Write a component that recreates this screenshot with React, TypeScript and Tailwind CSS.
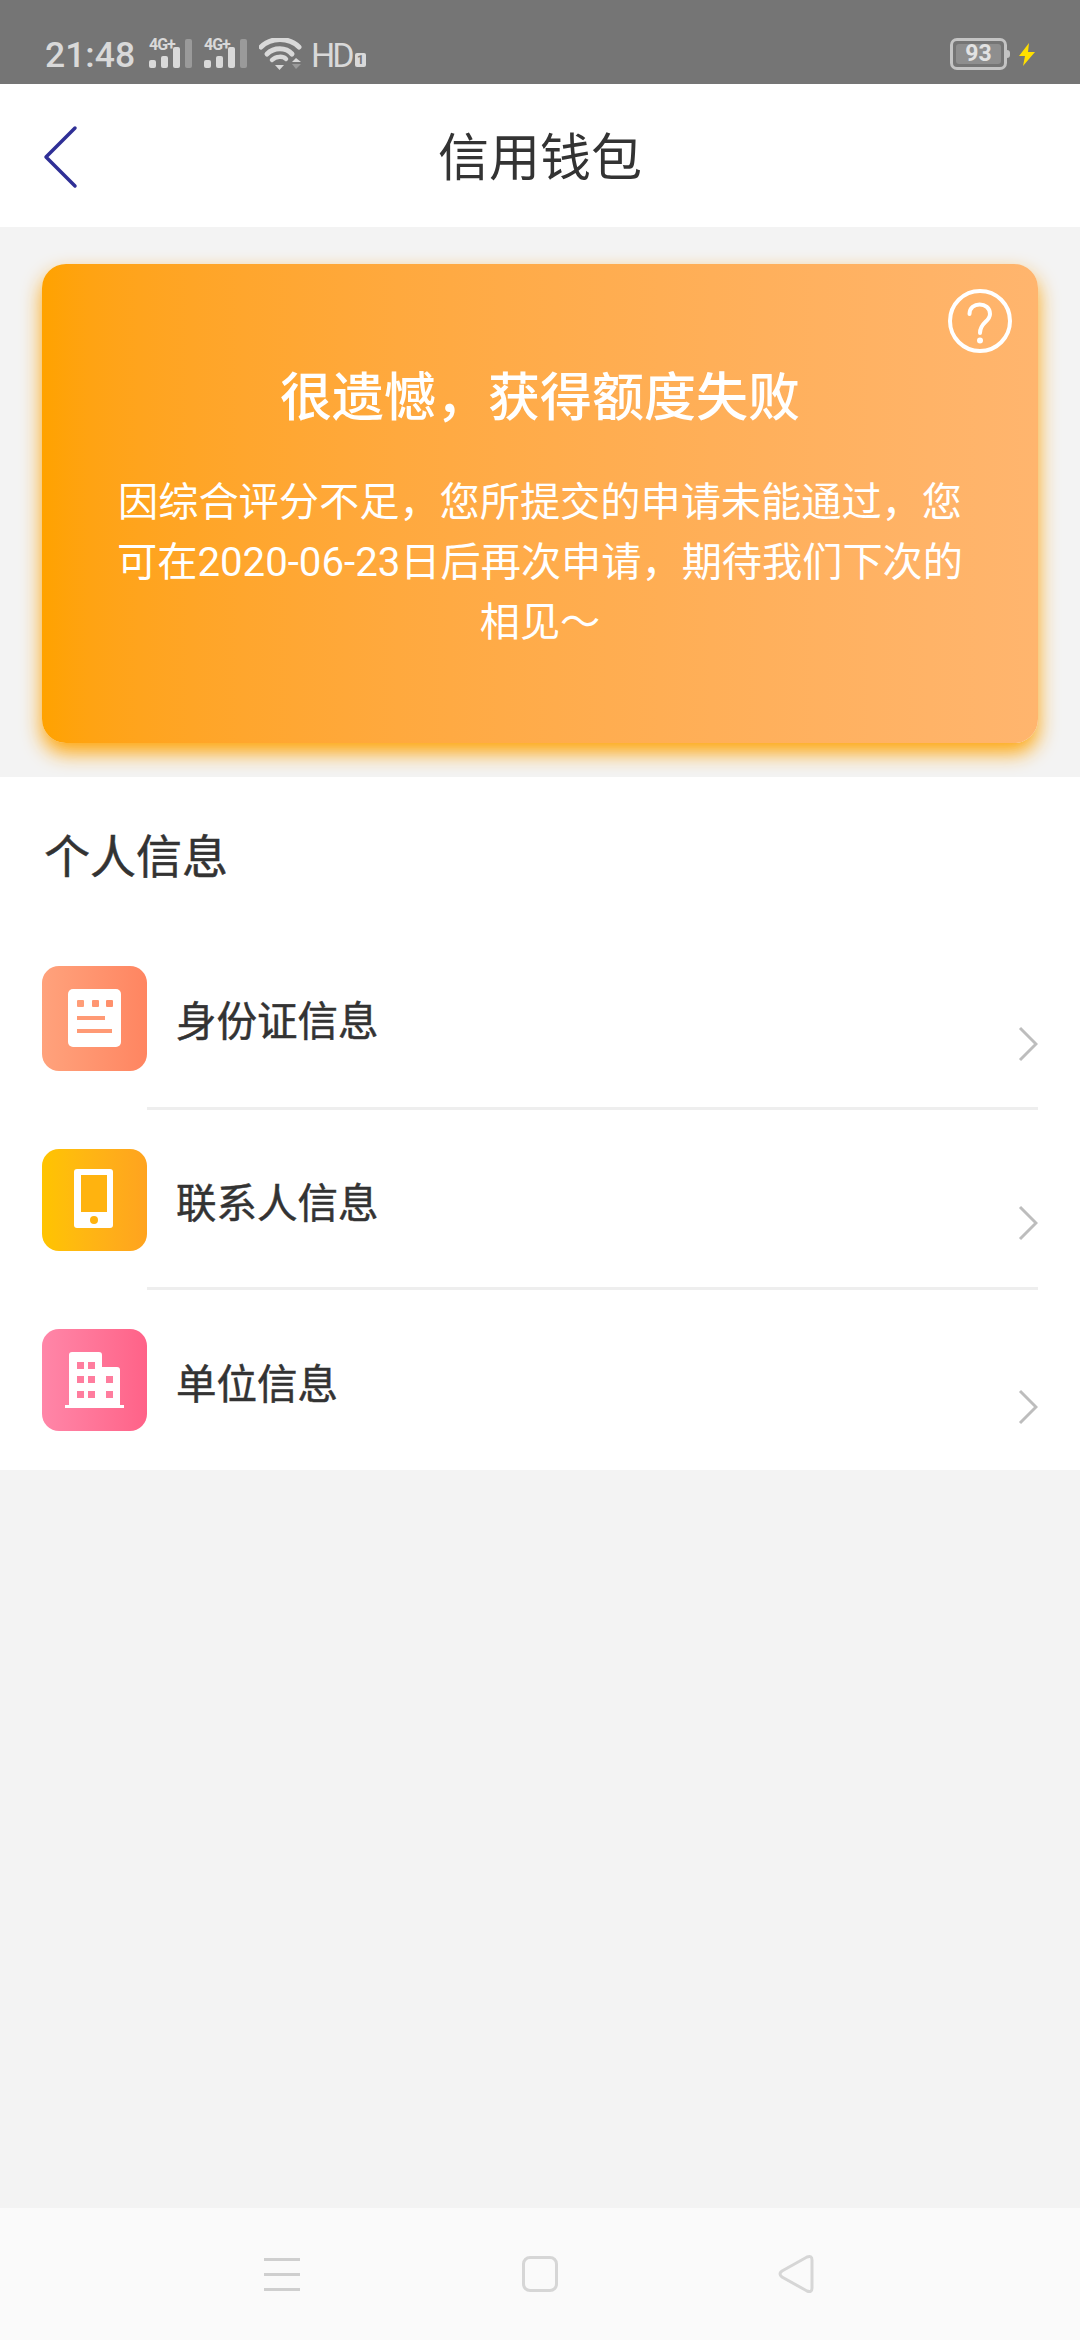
import React from 'react';

const cjk = { fontFamily: 'Roboto, "Noto Sans CJK SC", "Noto Sans", sans-serif' };

function SignalIcon() {
  return (
    <div className="relative w-[43px] h-[29px]">
      <span className="absolute left-0 top-[-1px] text-[16px] leading-[13px] font-bold text-[#d9d9d9] tracking-[-1px]">4G+</span>
      <div className="absolute left-0 bottom-0 flex items-end gap-[5px]">
        <span className="w-[7px] h-[8px] rounded-[2px] bg-[#d9d9d9]" />
        <span className="w-[7px] h-[12px] rounded-[2px] bg-[#d9d9d9]" />
        <span className="w-[7px] h-[21px] rounded-[2px] bg-[#d9d9d9]" />
        <span className="w-[7px] h-[29px] rounded-[2px] bg-[#9a9a9a]" />
      </div>
    </div>
  );
}

function StatusBar() {
  return (
    <div className="h-[84px] bg-[#757575] flex items-start pt-[38px] pl-[45px] pr-[45px] text-[#d9d9d9]" style={{ fontFamily: 'Roboto, sans-serif' }}>
      <span className="text-[35.500px] leading-[34px] font-medium w-[104px]">21:48</span>
      <div className="flex gap-[12px] mt-[1px]">
        <SignalIcon />
        <SignalIcon />
      </div>
      <svg className="ml-[12px]" width="43" height="33" viewBox="0 0 43 33" fill="none">
        <path d="M2 9C12 -1 30 -1 40 9" stroke="#d9d9d9" strokeWidth="5" strokeLinecap="round" />
        <path d="M8 16C15 9 27 9 33 16" stroke="#d9d9d9" strokeWidth="5" strokeLinecap="round" />
        <path d="M13 22C17 18 24 18 27 21" stroke="#d9d9d9" strokeWidth="4.500" strokeLinecap="round" />
        <path d="M16 27H25L20.500 32Z" fill="#d9d9d9" />
        <path d="M33 24L37 20L42 24Z" fill="#d9d9d9" />
        <path d="M33 26H42L37 31Z" fill="#9a9a9a" />
      </svg>
      <span className="ml-[9px] w-[41px] text-[34px] leading-[34px] tracking-[-3px]">HD</span>
      <span className="ml-[3px] mt-[15px] w-[11px] h-[14px] rounded-[2px] bg-[#d9d9d9] text-[#757575] text-[12px] leading-[14px] font-bold text-center">1</span>
      <div className="ml-auto flex items-start">
        <div className="w-[57px] h-[32px] border-[3px] border-[#c4c4c4] rounded-[7px] p-[3px]">
          <div className="h-full rounded-[3px] bg-[#8e8e8e] text-[23px] leading-[20px] font-bold text-center text-[#e2e2e2]">93</div>
        </div>
        <span className="w-[3px] h-[8px] mt-[12px] bg-[#c4c4c4] rounded-r-[3px]" />
        <svg className="ml-[9px] mt-[5px]" width="16" height="23" viewBox="0 0 16 23">
          <path d="M10 0L0 13H6L4 23L16 9H9Z" fill="#ffdf00" />
        </svg>
      </div>
    </div>
  );
}

function Header() {
  return (
    <div className="relative h-[143px] bg-white flex items-center justify-center">
      <svg className="absolute left-[42px] top-[40px]" width="36" height="66" viewBox="0 0 36 66" fill="none">
        <path d="M33 4L4 33L33 62" stroke="#2f2f96" strokeWidth="3.500" strokeLinecap="round" strokeLinejoin="round" />
      </svg>
      <h1 className="mt-[6px] text-[51px] leading-none font-normal text-[#333333]" style={cjk}>信用钱包</h1>
    </div>
  );
}

function StatusCard() {
  return (
    <div className="pt-[37px] pb-[34px] px-[42px] bg-[#f3f3f3]">
      <div className="relative h-[479px] rounded-[24px] bg-gradient-to-r from-[#ffa200] to-[#ffb56e] shadow-[0_10px_20px_rgba(255,162,0,0.95)] px-[70px] pt-[100px] text-white text-center" style={cjk}>
        <svg className="absolute right-[26px] top-[25px]" width="64" height="64" viewBox="0 0 64 64" fill="none">
          <circle cx="32" cy="32" r="30" stroke="white" strokeWidth="4" />
          <path d="M21.500 25C21.500 12 42 12.500 42 25C42 33 32 33 32 44" stroke="white" strokeWidth="4" strokeLinecap="round" />
          <circle cx="32" cy="51.500" r="3" fill="white" />
        </svg>
        <h2 className="text-[52px] leading-[70px] font-medium">很遗憾，获得额度失败</h2>
        <p className="mt-[39px] text-[40.2px] leading-[60px]">因综合评分不足，您所提交的申请未能通过，您可在2020-06-23日后再次申请，期待我们下次的相见～</p>
      </div>
    </div>
  );
}

function IdIcon() {
  return (
    <svg width="105" height="105" viewBox="0 0 105 105" className="block">
      <rect x="26" y="23" width="53" height="58" rx="5" fill="white" />
      <rect x="35" y="34" width="7" height="7" rx="1" fill="#ff9d78" />
      <rect x="50" y="34" width="7" height="7" rx="1" fill="#ff9672" />
      <rect x="64" y="34" width="7" height="7" rx="1" fill="#ff906c" />
      <rect x="35" y="50" width="28" height="4" fill="#ff9a75" />
      <rect x="35" y="63" width="35" height="4" fill="#ff9a75" />
    </svg>
  );
}

function PhoneIcon() {
  return (
    <svg width="105" height="102" viewBox="0 0 105 102" className="block">
      <rect x="32" y="20" width="39" height="59" rx="3" fill="white" />
      <rect x="39" y="26" width="26" height="37" fill="#ffb30f" />
      <circle cx="52" cy="71" r="4" fill="#ffb30f" />
    </svg>
  );
}

function BuildingIcon() {
  const windows = [
    [35, 33], [46, 33],
    [35, 47], [46, 47], [64, 47],
    [35, 62], [46, 62], [64, 62],
  ];
  return (
    <svg width="105" height="102" viewBox="0 0 105 102" className="block">
      <path d="M27 76V26Q27 23 30 23H57Q60 23 60 26V38H75Q78 38 78 41V76H82V79H23V76Z" fill="white" />
      {windows.map(([x, y], i) => (
        <rect key={i} x={x} y={y} width="7" height="7" fill="#ff7d9e" />
      ))}
    </svg>
  );
}

const rows = [
  { label: '身份证信息', gradient: 'from-[#ffa27c] to-[#ff8561]', height: 'h-[105px]', icon: <IdIcon />, shift: 'pt-0', border: true, labelMt: 'mt-[11px]', arrowMt: 'mt-[54px]' },
  { label: '联系人信息', gradient: 'from-[#ffc400] to-[#ffa31f]', height: 'h-[102px]', icon: <PhoneIcon />, shift: 'pt-[3px]', border: true, labelMt: 'mt-[11px]', arrowMt: 'mt-[49px]' },
  { label: '单位信息', gradient: 'from-[#ff86a8] to-[#ff6288]', height: 'h-[102px]', icon: <BuildingIcon />, shift: 'pt-[3px]', border: false, labelMt: 'mt-[10px]', arrowMt: 'mt-[54px]' },
];

function InfoRow({ label, gradient, height, icon, shift, border, labelMt, arrowMt }: (typeof rows)[number]) {
  return (
    <div className={`h-[180px] flex pl-[42px] pr-[42px] ${shift}`}>
      <div className={`self-center mb-[3px] w-[105px] ${height} rounded-[17px] overflow-hidden bg-gradient-to-r ${gradient}`}>{icon}</div>
      <div className={`flex-1 flex items-center pl-[29px] -mt-[3px] ${border ? 'border-b-[3px] border-[#eeeeee]' : ''}`}>
        <span className={`text-[40.500px] leading-none text-[#333333] font-normal [-webkit-text-stroke:0.5px_#333333] ${labelMt}`} style={cjk}>{label}</span>
        <svg className={`ml-auto ${arrowMt}`} width="20" height="36" viewBox="0 0 20 36" fill="none">
          <path d="M2 2L18 18L2 34" stroke="#bdbdbd" strokeWidth="3" />
        </svg>
      </div>
    </div>
  );
}

function NavBar() {
  return (
    <div className="relative h-[132px] bg-[#fafafa]">
      <div className="absolute left-[264px] top-[50px] w-[36px] flex flex-col gap-[12px]">
        <span className="h-[3px] bg-[#cfcfcf]" />
        <span className="h-[3px] bg-[#cfcfcf]" />
        <span className="h-[3px] bg-[#cfcfcf]" />
      </div>
      <div className="absolute left-[522px] top-[48px] w-[36px] h-[36px] border-[3px] border-[#d6d6d6] rounded-[8px]" />
      <svg className="absolute left-[777px] top-[46px]" width="38" height="40" viewBox="0 0 38 40" fill="none">
        <path d="M5 17L30 3Q35 1 35 6V34Q35 39 30 37L5 23Q1 20 5 17Z" stroke="#d6d6d6" strokeWidth="3" />
      </svg>
    </div>
  );
}

export default function App() {
  return (
    <div className="w-[1080px] h-[2340px] flex flex-col bg-[#f3f3f3] overflow-hidden">
      <StatusBar />
      <Header />
      <StatusCard />
      <section className="bg-white">
        <div className="h-[153px] pl-[44px] flex items-center">
          <h3 className="mt-[6px] text-[46px] leading-none font-normal [-webkit-text-stroke:0.5px_#333333] text-[#333333]" style={cjk}>个人信息</h3>
        </div>
        {rows.map((row) => (
          <InfoRow key={row.label} {...row} />
        ))}
      </section>
      <div className="flex-1" />
      <NavBar />
    </div>
  );
}
